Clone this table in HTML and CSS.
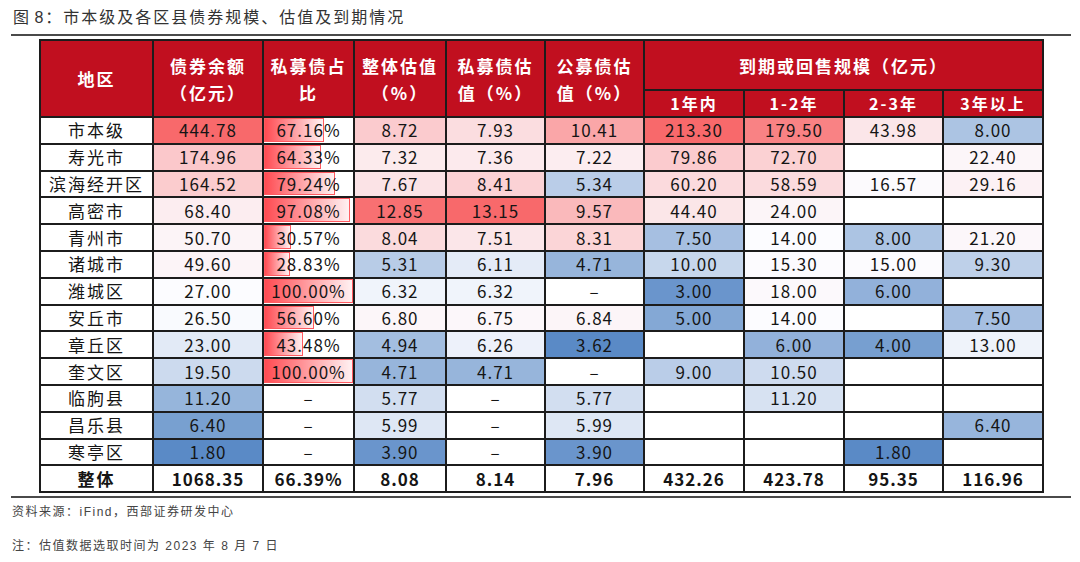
FILE: index.html
```html
<!DOCTYPE html>
<html lang="zh-CN">
<head>
<meta charset="utf-8">
<title>市本级及各区县债券规模、估值及到期情况</title>
<link rel="stylesheet" href="styles.css">
</head>
<body>
<div class="page">
  <div class="title">图 8：市本级及各区县债券规模、估值及到期情况</div>
  <div class="rule"></div>
  <table class="grid">
    <colgroup>
      <col class="c-area"><col class="c-bal"><col class="c-pct"><col class="c-v1"><col class="c-v2"><col class="c-v3"><col class="c-m"><col class="c-m"><col class="c-m2"><col class="c-m">
    </colgroup>
    <thead>
      <tr class="h1">
        <th rowspan="2">地区</th>
        <th rowspan="2">债券余额<br>（亿元）</th>
        <th rowspan="2">私募债占<br>比</th>
        <th rowspan="2">整体估值<br>（%）</th>
        <th rowspan="2">私募债估<br>值（%）</th>
        <th rowspan="2">公募债估<br>值（%）</th>
        <th colspan="4">到期或回售规模（亿元）</th>
      </tr>
      <tr class="h2">
        <th>1年内</th><th>1-2年</th><th>2-3年</th><th>3年以上</th>
      </tr>
    </thead>
    <tbody>
      <tr>
        <td class="area">市本级</td>
        <td style="background:#F8696B">444.78</td>
        <td class="pct"><span class="bar" style="width:67.16%"></span><span class="val">67.16%</span></td>
        <td style="background:#FBCBCE">8.72</td>
        <td style="background:#FBDDE0">7.93</td>
        <td style="background:#FAA6A8">10.41</td>
        <td style="background:#F8696B">213.30</td>
        <td style="background:#F98284">179.50</td>
        <td style="background:#FBE6E9">43.98</td>
        <td style="background:#ACC4E3">8.00</td>
      </tr>
      <tr>
        <td class="area">寿光市</td>
        <td style="background:#FBC8CB">174.96</td>
        <td class="pct"><span class="bar" style="width:64.33%"></span><span class="val">64.33%</span></td>
        <td style="background:#FCEBED">7.32</td>
        <td style="background:#FCEAED">7.36</td>
        <td style="background:#FCEDF0">7.22</td>
        <td style="background:#FBCBCE">79.86</td>
        <td style="background:#FBD1D3">72.70</td>
        <td></td>
        <td style="background:#FCF6F9">22.40</td>
      </tr>
      <tr>
        <td class="area">滨海经开区</td>
        <td style="background:#FBCCCE">164.52</td>
        <td class="pct"><span class="bar" style="width:79.24%"></span><span class="val">79.24%</span></td>
        <td style="background:#FBE3E6">7.67</td>
        <td style="background:#FBD2D5">8.41</td>
        <td style="background:#BACDE8">5.34</td>
        <td style="background:#FBDADD">60.20</td>
        <td style="background:#FBDBDE">58.59</td>
        <td style="background:#FCFAFD">16.57</td>
        <td style="background:#FCF1F4">29.16</td>
      </tr>
      <tr>
        <td class="area">高密市</td>
        <td style="background:#FCEDF0">68.40</td>
        <td class="pct"><span class="bar" style="width:97.08%"></span><span class="val">97.08%</span></td>
        <td style="background:#F87072">12.85</td>
        <td style="background:#F8696B">13.15</td>
        <td style="background:#FAB9BB">9.57</td>
        <td style="background:#FBE6E8">44.40</td>
        <td style="background:#FCF5F8">24.00</td>
        <td></td>
        <td></td>
      </tr>
      <tr>
        <td class="area">青州市</td>
        <td style="background:#FCF4F7">50.70</td>
        <td class="pct"><span class="bar" style="width:30.57%"></span><span class="val">30.57%</span></td>
        <td style="background:#FBDBDD">8.04</td>
        <td style="background:#FBE6E9">7.51</td>
        <td style="background:#FBD5D7">8.31</td>
        <td style="background:#A6BFE1">7.50</td>
        <td style="background:#FCFCFF">14.00</td>
        <td style="background:#ACC4E3">8.00</td>
        <td style="background:#FCF7FA">21.20</td>
      </tr>
      <tr>
        <td class="area">诸城市</td>
        <td style="background:#FCF4F7">49.60</td>
        <td class="pct"><span class="bar" style="width:28.83%"></span><span class="val">28.83%</span></td>
        <td style="background:#B8CCE7">5.31</td>
        <td style="background:#E4EBF7">6.11</td>
        <td style="background:#97B5DB">4.71</td>
        <td style="background:#C7D7EC">10.00</td>
        <td style="background:#FCFBFE">15.30</td>
        <td style="background:#FCFBFE">15.00</td>
        <td style="background:#BED0E9">9.30</td>
      </tr>
      <tr>
        <td class="area">潍城区</td>
        <td style="background:#FCFCFF">27.00</td>
        <td class="pct"><span class="bar" style="width:100%"></span><span class="val">100.00%</span></td>
        <td style="background:#F0F4FB">6.32</td>
        <td style="background:#F0F4FB">6.32</td>
        <td>–</td>
        <td style="background:#6A95CC">3.00</td>
        <td style="background:#FCF9FC">18.00</td>
        <td style="background:#92B1DA">6.00</td>
        <td></td>
      </tr>
      <tr>
        <td class="area">安丘市</td>
        <td style="background:#F9FAFE">26.50</td>
        <td class="pct"><span class="bar" style="width:56.6%"></span><span class="val">56.60%</span></td>
        <td style="background:#FCF6F9">6.80</td>
        <td style="background:#FCF7FA">6.75</td>
        <td style="background:#FCF5F8">6.84</td>
        <td style="background:#84A8D5">5.00</td>
        <td style="background:#FCFCFF">14.00</td>
        <td></td>
        <td style="background:#A6BFE1">7.50</td>
      </tr>
      <tr>
        <td class="area">章丘区</td>
        <td style="background:#E2EAF6">23.00</td>
        <td class="pct"><span class="bar" style="width:43.48%"></span><span class="val">43.48%</span></td>
        <td style="background:#A3BEE0">4.94</td>
        <td style="background:#EDF1FA">6.26</td>
        <td style="background:#5A8AC6">3.62</td>
        <td></td>
        <td style="background:#92B1DA">6.00</td>
        <td style="background:#779FD0">4.00</td>
        <td style="background:#EFF3FA">13.00</td>
      </tr>
      <tr>
        <td class="area">奎文区</td>
        <td style="background:#CCDAEE">19.50</td>
        <td class="pct"><span class="bar" style="width:100%"></span><span class="val">100.00%</span></td>
        <td style="background:#97B5DB">4.71</td>
        <td style="background:#97B5DB">4.71</td>
        <td>–</td>
        <td style="background:#BACDE8">9.00</td>
        <td style="background:#CEDBEF">10.50</td>
        <td></td>
        <td></td>
      </tr>
      <tr>
        <td class="area">临朐县</td>
        <td style="background:#96B5DB">11.20</td>
        <td>–</td>
        <td style="background:#D2DEF0">5.77</td>
        <td>–</td>
        <td style="background:#D2DEF0">5.77</td>
        <td></td>
        <td style="background:#D7E2F2">11.20</td>
        <td></td>
        <td></td>
      </tr>
      <tr>
        <td class="area">昌乐县</td>
        <td style="background:#78A0D0">6.40</td>
        <td>–</td>
        <td style="background:#DEE7F4">5.99</td>
        <td>–</td>
        <td style="background:#DEE7F4">5.99</td>
        <td></td>
        <td></td>
        <td></td>
        <td style="background:#97B5DC">6.40</td>
      </tr>
      <tr>
        <td class="area">寒亭区</td>
        <td style="background:#5A8AC6">1.80</td>
        <td>–</td>
        <td style="background:#6A95CC">3.90</td>
        <td>–</td>
        <td style="background:#6A95CC">3.90</td>
        <td></td>
        <td></td>
        <td style="background:#5A8AC6">1.80</td>
        <td></td>
      </tr>
      <tr class="total">
        <td class="area">整体</td>
        <td>1068.35</td>
        <td>66.39%</td>
        <td>8.08</td>
        <td>8.14</td>
        <td>7.96</td>
        <td>432.26</td>
        <td>423.78</td>
        <td>95.35</td>
        <td>116.96</td>
      </tr>
    </tbody>
  </table>
  <div class="rule rule-bottom"></div>
  <p class="note">资料来源：iFind，西部证券研发中心</p>
  <p class="note note-2">注：估值数据选取时间为 2023 年 8 月 7 日</p>
</div>
</body>
</html>
```
FILE: styles.css
```css
html, body {
  margin: 0;
  padding: 0;
  background: #ffffff;
}

body {
  font-family: "Noto Sans CJK SC", "Noto Sans", sans-serif;
  color: #151515;
}

.page {
  width: 1060px;
  padding: 7px 0 0 11px;
}

.title {
  font-family: "Liberation Sans", "Noto Sans CJK SC", sans-serif;
  font-size: 16px;
  line-height: 22px;
  letter-spacing: 2px;
  word-spacing: -3px;
  color: #333333;
  padding-left: 2px;
}

.rule {
  height: 2px;
  background: #4a4a4a;
  margin-top: 5px;
}

.grid {
  margin: 3px 0 0 28px;
  border-collapse: collapse;
  table-layout: fixed;
  width: 1003px;
}

.c-area { width: 113px; }
.c-bal { width: 110px; }
.c-pct { width: 91px; }
.c-v1 { width: 92px; }
.c-v2 { width: 99px; }
.c-v3 { width: 99px; }
.c-m { width: 100px; }
.c-m2 { width: 99px; }

.grid th,
.grid td {
  border: 2px solid #1c1c1c;
  padding: 0;
  text-align: center;
  vertical-align: middle;
}

.grid th {
  background: #c10f1f;
  color: #ffffff;
  font-weight: 700;
  font-size: 17px;
  line-height: 27px;
  letter-spacing: 2px;
}

.grid .h1 th { height: 48px; }
.grid .h2 th {
  height: 25px;
  line-height: 25px;
  font-size: 16px;
}

.grid td {
  height: 24.8px;
  font-size: 17px;
  line-height: 20px;
  letter-spacing: 1px;
  background: #ffffff;
}

.grid td.area {
  letter-spacing: 2px;
}

.grid td.pct {
  position: relative;
}

.bar {
  position: absolute;
  left: 0;
  top: 0;
  bottom: 1px;
  box-sizing: border-box;
  border: 1px solid #ff5a60;
  background: linear-gradient(to right, #ff4b52, #ffd9db 85%, #fff1f2);
}

.val {
  position: relative;
}

.total td {
  font-weight: 700;
}

.rule-bottom {
  margin-top: 3px;
}

.note {
  margin: 6px 0 0 1px;
  font-family: "Liberation Sans", "Noto Sans CJK SC", sans-serif;
  font-size: 12px;
  line-height: 16px;
  letter-spacing: 1.5px;
  color: #444444;
}

.note-2 {
  margin-top: 18px;
}
```
